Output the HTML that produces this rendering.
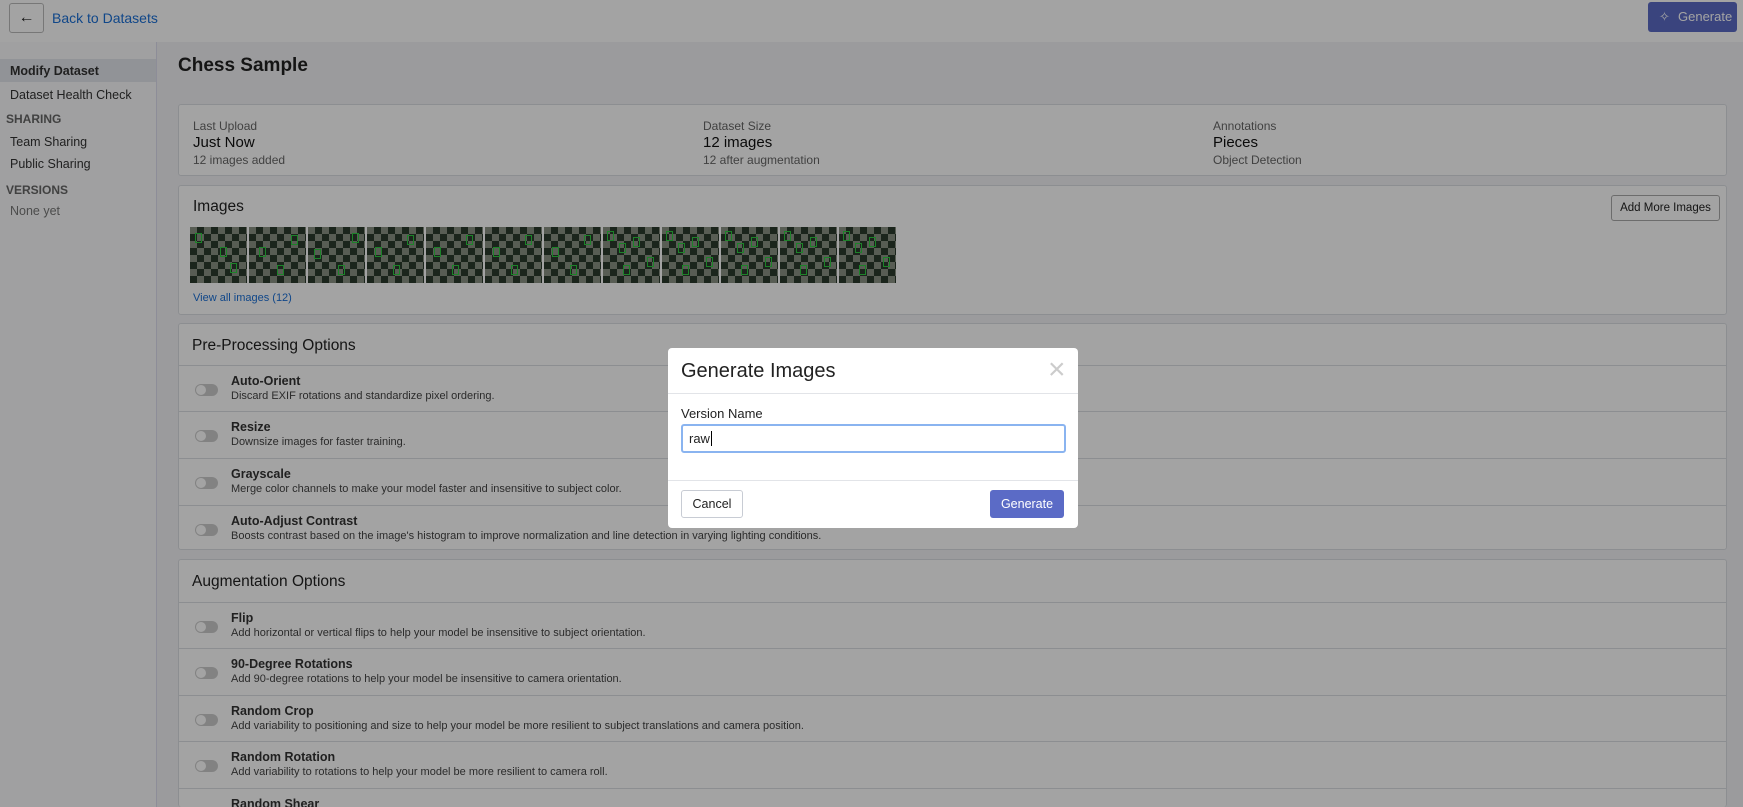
<!DOCTYPE html>
<html><head><meta charset="utf-8"><style>
*{box-sizing:border-box;margin:0;padding:0}
html{width:1743px;height:807px;overflow:hidden}
body{width:1743px;height:807px;overflow:hidden;font-family:"Liberation Sans",sans-serif;background:#f2f3f6;position:relative;color:#222}
.hdr{position:absolute;left:0;top:0;width:1743px;height:42px;background:#fff}
.back{position:absolute;left:9px;top:3px;width:35px;height:30px;border:1px solid #bbb;border-radius:3px;font-size:16px;text-align:center;line-height:27px}
.backt{position:absolute;left:52px;top:10px;font-size:14px;color:#1a6fd6}
.gen{position:absolute;left:1648px;top:2px;width:89px;height:30px;background:#5b6bc6;border-radius:3px;color:#fff;font-size:13px;line-height:30px;padding-left:30px}
.side{position:absolute;left:0;top:42px;width:157px;height:765px;background:#fafbfc;border-right:1px solid #dde}
.si{position:absolute;left:10px;font-size:12.5px;color:#333}
.sh{position:absolute;left:6px;font-size:12px;font-weight:bold;color:#666}
.card{position:absolute;left:178px;width:1549px;background:#fff;border:1px solid #dcdfe3;border-radius:3px;overflow:hidden}
.lab{position:absolute;font-size:12px;color:#666}
.val{position:absolute;font-size:15px;color:#111}
.row{position:absolute;left:0;width:100%;border-top:1px solid #dcdfe3;height:47px}
.row .t{position:absolute;left:52px;top:8px;font-size:12.5px;font-weight:bold;color:#333}
.row .d{position:absolute;left:52px;top:24px;font-size:11px;color:#444}
.row .tg{position:absolute;left:16px;top:18px;width:23px;height:12px;border-radius:6px;background:#ccc}
.row .tg:after{content:"";position:absolute;left:1px;top:1px;width:10px;height:10px;border-radius:5px;background:#fff}
.ch{position:absolute;font-size:15.5px;color:#222}
.th{position:absolute;top:227px;width:57px;height:56px;background:repeating-conic-gradient(#2b3a2c 0 25%,#8a9284 0 50%) 0 0/14px 14px}
.th i{position:absolute;border:1.5px solid #2ecc40;width:7px;height:10px}
.ov{position:absolute;left:0;top:0;width:1743px;height:807px;background:rgba(0,0,0,0.36)}
.modal{position:absolute;left:668px;top:348px;width:410px;height:180px;background:#fff;border-radius:4px}
</style></head><body>
<div class="hdr"><div class="back">&#8592;</div><div class="backt">Back to Datasets</div>
<div class="gen"><span style="position:absolute;left:11px;top:0">&#10023;</span>Generate</div></div>
<div class="side">
<div style="position:absolute;left:0;top:17px;width:156px;height:23px;background:#e3e6ec"></div>
<div class="si" style="top:22px;font-weight:bold">Modify Dataset</div>
<div class="si" style="top:46px">Dataset Health Check</div>
<div class="sh" style="top:70px">SHARING</div>
<div class="si" style="top:93px">Team Sharing</div>
<div class="si" style="top:115px">Public Sharing</div>
<div class="sh" style="top:141px">VERSIONS</div>
<div class="si" style="top:162px;color:#777">None yet</div>
</div>
<div style="position:absolute;left:178px;top:55px;font-size:19px;font-weight:bold">Chess Sample</div>
<div class="card" style="top:104px;height:72px">
<div class="lab" style="left:14px;top:14px">Last Upload</div><div class="val" style="left:14px;top:29px">Just Now</div><div class="lab" style="left:14px;top:48px">12 images added</div>
<div class="lab" style="left:524px;top:14px">Dataset Size</div><div class="val" style="left:524px;top:29px">12 images</div><div class="lab" style="left:524px;top:48px">12 after augmentation</div>
<div class="lab" style="left:1034px;top:14px">Annotations</div><div class="val" style="left:1034px;top:29px">Pieces</div><div class="lab" style="left:1034px;top:48px">Object Detection</div>
</div>
<div class="card" style="top:185px;height:130px">
<div class="ch" style="left:14px;top:12px">Images</div>
<div style="position:absolute;left:1432px;top:9px;width:109px;height:26px;border:1px solid #aaa;border-radius:3px;font-size:11.5px;text-align:center;line-height:24px">Add More Images</div>
<div style="position:absolute;left:14px;top:106px;font-size:11px;color:#1a6fd6">View all images (12)</div>
</div>
<div class="th" style="left:190px"><i style="left:5px;top:6px"></i><i style="left:30px;top:20px"></i><i style="left:40px;top:36px"></i></div>
<div class="th" style="left:249px"><i style="left:10px;top:20px"></i><i style="left:42px;top:8px"></i><i style="left:28px;top:38px"></i></div>
<div class="th" style="left:308px"><i style="left:6px;top:22px"></i><i style="left:44px;top:6px"></i><i style="left:30px;top:38px"></i></div>
<div class="th" style="left:367px"><i style="left:8px;top:20px"></i><i style="left:40px;top:8px"></i><i style="left:26px;top:38px"></i></div>
<div class="th" style="left:426px"><i style="left:8px;top:20px"></i><i style="left:40px;top:8px"></i><i style="left:26px;top:38px"></i></div>
<div class="th" style="left:485px"><i style="left:8px;top:20px"></i><i style="left:40px;top:8px"></i><i style="left:26px;top:38px"></i></div>
<div class="th" style="left:544px"><i style="left:8px;top:20px"></i><i style="left:40px;top:8px"></i><i style="left:26px;top:38px"></i></div>
<div class="th" style="left:603px"><i style="left:4px;top:4px"></i><i style="left:16px;top:16px"></i><i style="left:30px;top:10px"></i><i style="left:44px;top:30px"></i><i style="left:20px;top:38px"></i></div>
<div class="th" style="left:662px"><i style="left:4px;top:4px"></i><i style="left:16px;top:16px"></i><i style="left:30px;top:10px"></i><i style="left:44px;top:30px"></i><i style="left:20px;top:38px"></i></div>
<div class="th" style="left:721px"><i style="left:4px;top:4px"></i><i style="left:16px;top:16px"></i><i style="left:30px;top:10px"></i><i style="left:44px;top:30px"></i><i style="left:20px;top:38px"></i></div>
<div class="th" style="left:780px"><i style="left:4px;top:4px"></i><i style="left:16px;top:16px"></i><i style="left:30px;top:10px"></i><i style="left:44px;top:30px"></i><i style="left:20px;top:38px"></i></div>
<div class="th" style="left:839px"><i style="left:4px;top:4px"></i><i style="left:16px;top:16px"></i><i style="left:30px;top:10px"></i><i style="left:44px;top:30px"></i><i style="left:20px;top:38px"></i></div>
<div class="card" style="top:323px;height:227px">
<div class="ch" style="left:13px;top:13px">Pre-Processing Options</div>
<div class="row" style="top:41px"><div class="tg"></div><div class="t">Auto-Orient</div><div class="d">Discard EXIF rotations and standardize pixel ordering.</div></div>
<div class="row" style="top:87px"><div class="tg"></div><div class="t">Resize</div><div class="d">Downsize images for faster training.</div></div>
<div class="row" style="top:134px"><div class="tg"></div><div class="t">Grayscale</div><div class="d">Merge color channels to make your model faster and insensitive to subject color.</div></div>
<div class="row" style="top:181px"><div class="tg"></div><div class="t">Auto-Adjust Contrast</div><div class="d">Boosts contrast based on the image's histogram to improve normalization and line detection in varying lighting conditions.</div></div>
</div>
<div class="card" style="top:559px;height:248px;border-bottom:none">
<div class="ch" style="left:13px;top:13px">Augmentation Options</div>
<div class="row" style="top:42px"><div class="tg"></div><div class="t">Flip</div><div class="d">Add horizontal or vertical flips to help your model be insensitive to subject orientation.</div></div>
<div class="row" style="top:88px"><div class="tg"></div><div class="t">90-Degree Rotations</div><div class="d">Add 90-degree rotations to help your model be insensitive to camera orientation.</div></div>
<div class="row" style="top:135px"><div class="tg"></div><div class="t">Random Crop</div><div class="d">Add variability to positioning and size to help your model be more resilient to subject translations and camera position.</div></div>
<div class="row" style="top:181px"><div class="tg"></div><div class="t">Random Rotation</div><div class="d">Add variability to rotations to help your model be more resilient to camera roll.</div></div>
<div class="row" style="top:228px"><div class="tg"></div><div class="t">Random Shear</div></div>
</div>
<div class="ov"></div>
<div class="modal">
<div style="position:absolute;left:13px;top:12px;font-size:20px;color:#222">Generate Images</div>
<div style="position:absolute;left:380px;top:4px;font-size:30px;color:#ccc;line-height:36px">&#215;</div>
<div style="position:absolute;left:0;top:45px;width:100%;border-top:1px solid #e2e4e8"></div>
<div style="position:absolute;left:13px;top:58px;font-size:13px;color:#222">Version Name</div>
<div style="position:absolute;left:13px;top:76px;width:385px;height:29px;border:2px solid #8ab4f0;border-radius:3px;font-size:13px;padding:6px 6px;line-height:14px">raw<span style="border-left:1px solid #000;margin-left:1px"></span></div>
<div style="position:absolute;left:0;top:132px;width:100%;border-top:1px solid #e2e4e8"></div>
<div style="position:absolute;left:13px;top:142px;width:62px;height:28px;border:1px solid #c8ccd4;border-radius:3px;font-size:12.5px;text-align:center;line-height:26px">Cancel</div>
<div style="position:absolute;left:322px;top:142px;width:74px;height:28px;background:#5b6bc6;border-radius:3px;font-size:12.5px;color:#fff;text-align:center;line-height:28px">Generate</div>
</div>
</body></html>
